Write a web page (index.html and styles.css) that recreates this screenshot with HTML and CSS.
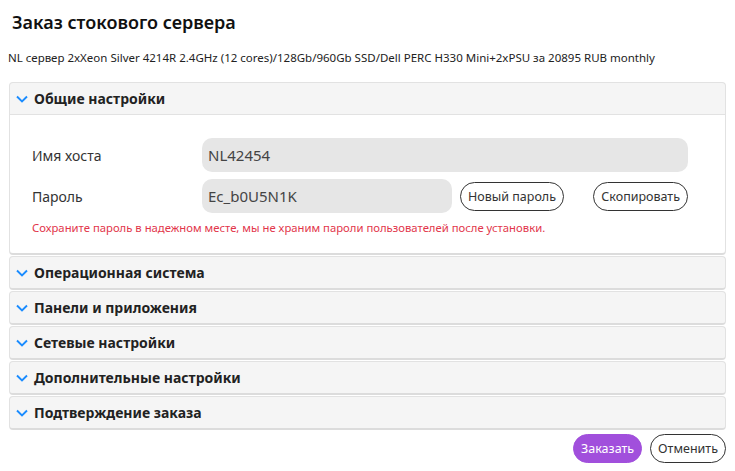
FILE: index.html
```html
<!DOCTYPE html>
<html lang="ru">

<head>
    <meta charset="UTF-8">
    <meta name="viewport" content="width=device-width, initial-scale=1.0">
    <title>Заказ стокового сервера</title>
    <link rel="stylesheet" href="styles.css">
</head>

<body>
    <div class="order">
        <h1 class="order-title">Заказ стокового сервера</h1>
        <p class="order-desc">NL сервер 2xXeon Silver 4214R 2.4GHz (12 cores)/128Gb/960Gb SSD/Dell PERC H330 Mini+2xPSU за 20895 RUB monthly</p>

        <div class="accordion">
            <div class="acc-item open">
                <div class="acc-head">
                    <svg class="chevron" viewBox="0 0 12 8"><path d="M1 1.5 6 6.5 11 1.5"/></svg>
                    <span>Общие настройки</span>
                </div>
                <div class="acc-body">
                    <div class="field">
                        <label for="hostname">Имя хоста</label>
                        <input type="text" id="hostname" value="NL42454">
                    </div>
                    <div class="field">
                        <label for="password">Пароль</label>
                        <input type="text" id="password" class="short" value="Ec_b0U5N1K">
                        <button class="btn btn-outline btn-new">Новый пароль</button>
                        <button class="btn btn-outline btn-copy">Скопировать</button>
                    </div>
                    <p class="warn">Сохраните пароль в надежном месте, мы не храним пароли пользователей после установки.</p>
                </div>
            </div>
            <div class="acc-item">
                <div class="acc-head">
                    <svg class="chevron" viewBox="0 0 12 8"><path d="M1 1.5 6 6.5 11 1.5"/></svg>
                    <span>Операционная система</span>
                </div>
            </div>
            <div class="acc-item">
                <div class="acc-head">
                    <svg class="chevron" viewBox="0 0 12 8"><path d="M1 1.5 6 6.5 11 1.5"/></svg>
                    <span>Панели и приложения</span>
                </div>
            </div>
            <div class="acc-item">
                <div class="acc-head">
                    <svg class="chevron" viewBox="0 0 12 8"><path d="M1 1.5 6 6.5 11 1.5"/></svg>
                    <span>Сетевые настройки</span>
                </div>
            </div>
            <div class="acc-item">
                <div class="acc-head">
                    <svg class="chevron" viewBox="0 0 12 8"><path d="M1 1.5 6 6.5 11 1.5"/></svg>
                    <span>Дополнительные настройки</span>
                </div>
            </div>
            <div class="acc-item">
                <div class="acc-head">
                    <svg class="chevron" viewBox="0 0 12 8"><path d="M1 1.5 6 6.5 11 1.5"/></svg>
                    <span>Подтверждение заказа</span>
                </div>
            </div>
        </div>

        <div class="actions">
            <button class="btn btn-primary">Заказать</button>
            <button class="btn btn-outline">Отменить</button>
        </div>
    </div>
</body>

</html>
```

FILE: styles.css
```css
body {
    margin: 0;
    font-family: "Noto Sans", "Open Sans", sans-serif;
    color: #222;
    background: #fff;
}

.order {
    padding: 0 9px 0 9px;
}

.order-title {
    margin: 0;
    padding: 10px 0 0 3px;
    font-size: 18px;
    font-weight: 600;
    line-height: 24px;
    color: #111;
}

.order-desc {
    margin: 16px 0 0 -1px;
    font-size: 11.5px;
    line-height: 16px;
    color: #222;
    white-space: nowrap;
}

.accordion {
    margin-top: 16px;
}

/* each section is its own little card */
.acc-item {
    border: 1px solid #e2e2e2;
    border-bottom: 2px solid #dcdcdc;
    border-radius: 4px;
    margin-bottom: 1px;
    background: #f5f5f5;
}

.acc-head {
    display: flex;
    align-items: center;
    height: 31px;
    padding-left: 6px;
    font-size: 14px;
    font-weight: 700;
    color: #222;
}

.chevron {
    width: 12px;
    height: 8px;
    margin-right: 6px;
    fill: none;
    stroke: #1a8cff;
    stroke-width: 1.9;
}

.acc-item.open .acc-head {
    border-bottom: 1px solid #e2e2e2;
}

.acc-body {
    background: #fff;
    padding: 23px 37px 18px 22px;
    border-radius: 0 0 4px 4px;
}

.field {
    display: flex;
    align-items: center;
    margin-bottom: 7px;
}

.field label {
    width: 170px;
    font-size: 14px;
    color: #333;
}

.field input {
    flex: 1;
    height: 34px;
    border: none;
    border-radius: 10px;
    background: #e6e6e6;
    padding: 0 6px;
    box-sizing: border-box;
    font-family: inherit;
    font-size: 15px;
    color: #444;
}

.field input.short {
    flex: 0 0 250px;
}

.btn {
    font-family: inherit;
    font-size: 12.5px;
    height: 29px;
    padding: 0 7px;
    border-radius: 15px;
    cursor: pointer;
}

.btn-outline {
    background: #fff;
    border: 1px solid #333;
    color: #333;
}

.btn-new {
    margin-left: 8px;
}

.btn-copy {
    margin-left: auto;
}

.btn-primary {
    background: #a14fdc;
    border: 1px solid #a14fdc;
    color: #fff;
}

.warn {
    margin: 3px 0 0 0;
    font-size: 11.3px;
    color: #e2364b;
}

.actions {
    display: flex;
    justify-content: flex-end;
    gap: 8px;
    margin-top: 4px;
}
```
